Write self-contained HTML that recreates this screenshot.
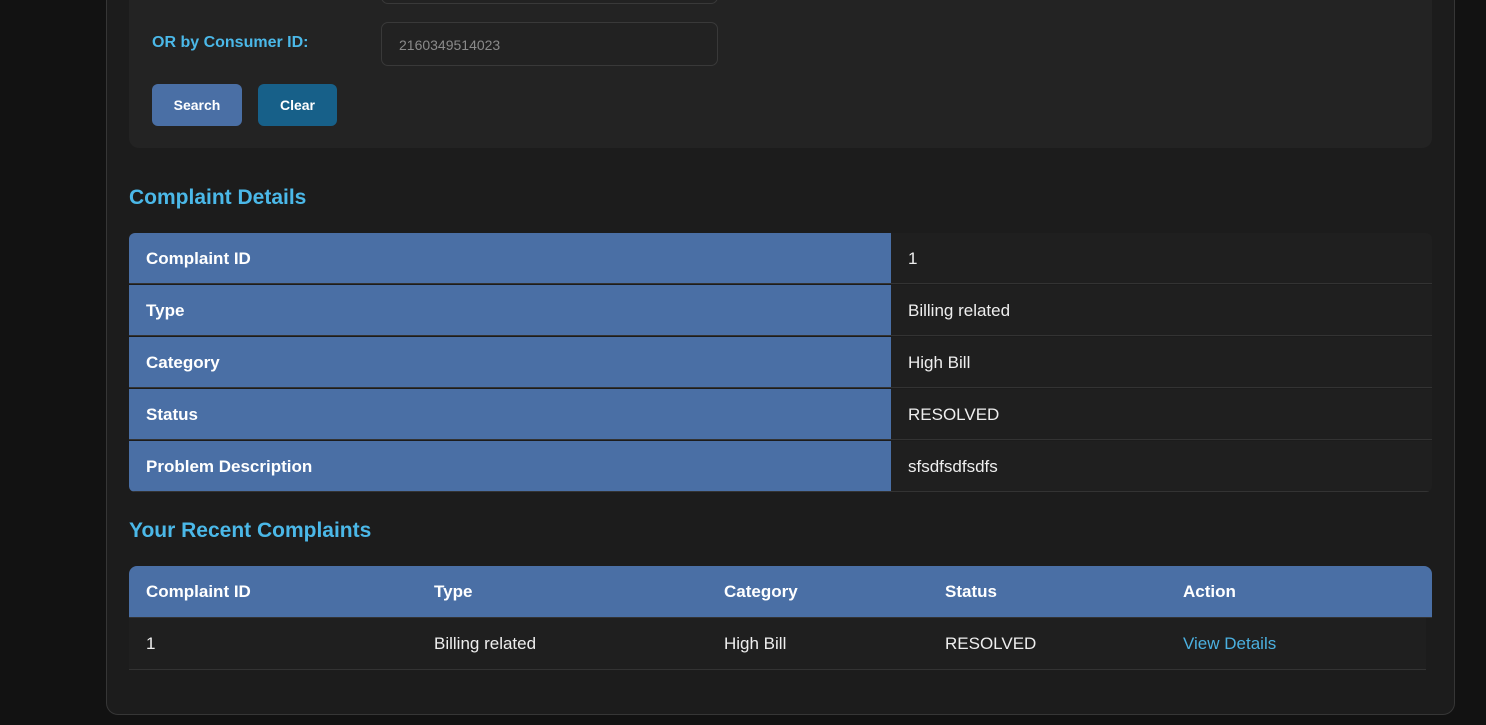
<!DOCTYPE html><html><head><style>
body{margin:0;width:1486px;height:725px;background:#121212;font-family:"Liberation Sans",sans-serif;overflow:hidden;position:relative}
.c{position:absolute;left:106px;top:-20px;width:1347px;height:733px;background:#1c1c1c;border:1px solid #363636;border-radius:12px}
.p{position:absolute;left:129px;top:-20px;width:1303px;height:168px;background:#232323;border-radius:10px}
.in{position:absolute;left:381px;width:337px;height:44px;border:1px solid #393939;border-radius:7px;background:#222;color:#8a8a8a;font-size:14px;line-height:44px;box-sizing:border-box;padding-left:17px}
.lbl{position:absolute;left:152px;top:34px;color:#4bb8e8;font-size:16px;font-weight:bold}
.b{position:absolute;top:84px;height:42px;border-radius:6px;color:#fff;font-size:14px;font-weight:bold;line-height:42px;text-align:center}
h2{position:absolute;left:129px;margin:0;color:#4bb8e8;font-size:21px;font-weight:bold}
.t{position:absolute;left:129px;width:1303px}
.r{position:absolute;left:0;width:1303px;height:52px;font-size:17px;color:#eee}
.k{position:absolute;left:0;width:762px;height:51px;background:#4a6fa5;border-bottom:1px solid #333;font-weight:bold;color:#fff;line-height:51px;padding-left:17px;box-sizing:border-box}
.v{position:absolute;left:762px;width:541px;height:51px;background:#1f1f1f;border-bottom:1px solid #333;line-height:51px;padding-left:17px;box-sizing:border-box}
.cell{position:absolute;line-height:51px}
</style></head><body>
<div class="c"></div>
<div class="p"></div>
<div class="in" style="top:-40px"></div>
<div class="lbl">OR by Consumer ID:</div>
<div class="in" style="top:22px">2160349514023</div>
<div class="b" style="left:152px;width:90px;background:#4a6fa5">Search</div>
<div class="b" style="left:258px;width:79px;background:#176089">Clear</div>
<h2 style="top:186px">Complaint Details</h2>
<div class="t" style="top:233px;height:259px;border-radius:6px;overflow:hidden">
<div class="r" style="top:0"><div class="k">Complaint ID</div><div class="v">1</div></div>
<div class="r" style="top:52px"><div class="k">Type</div><div class="v">Billing related</div></div>
<div class="r" style="top:104px"><div class="k">Category</div><div class="v">High Bill</div></div>
<div class="r" style="top:156px"><div class="k">Status</div><div class="v">RESOLVED</div></div>
<div class="r" style="top:208px"><div class="k">Problem Description</div><div class="v">sfsdfsdfsdfs</div></div>
</div>
<h2 style="top:519px">Your Recent Complaints</h2>
<div class="t" style="top:566px;height:104px">
<div style="position:absolute;left:0;top:0;width:1303px;height:51px;background:#4a6fa5;border-radius:8px 8px 0 0;border-bottom:1px solid #333;color:#fff;font-weight:bold;font-size:17px">
<span class="cell" style="left:17px">Complaint ID</span><span class="cell" style="left:305px">Type</span><span class="cell" style="left:595px">Category</span><span class="cell" style="left:816px">Status</span><span class="cell" style="left:1054px">Action</span></div>
<div style="position:absolute;left:0;top:52px;width:1297px;height:51px;background:#1f1f1f;border-bottom:1px solid #333;color:#eee;font-size:17px">
<span class="cell" style="left:17px">1</span><span class="cell" style="left:305px">Billing related</span><span class="cell" style="left:595px">High Bill</span><span class="cell" style="left:816px">RESOLVED</span><span class="cell" style="left:1054px;color:#4bb0e0">View Details</span></div>
</div>
</body></html>
